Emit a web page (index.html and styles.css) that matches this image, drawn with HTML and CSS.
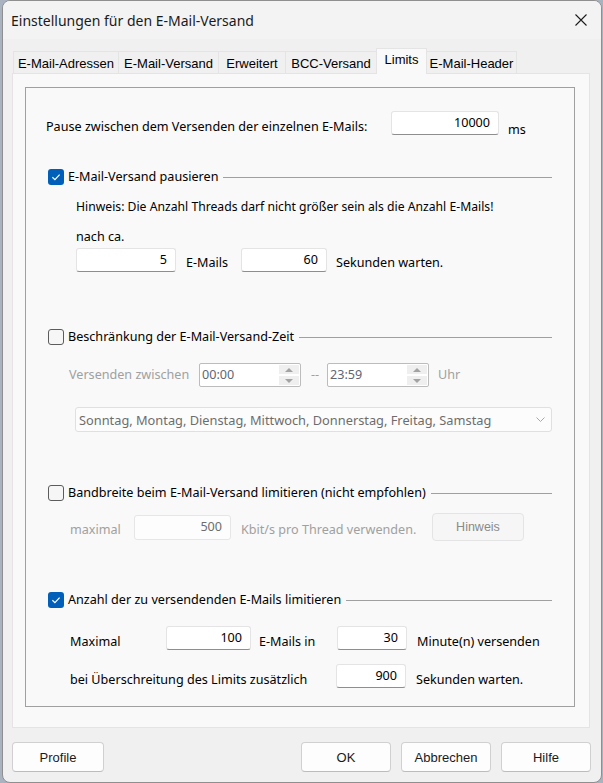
FILE: index.html
```html
<!DOCTYPE html>
<html lang="de">
<head>
<meta charset="utf-8">
<title>Einstellungen für den E-Mail-Versand</title>
<link rel="stylesheet" href="styles.css">
</head>
<body>
<div class="window">
  <div class="titlebar">
    <span class="title">Einstellungen für den E-Mail-Versand</span>
    <svg class="close" width="12" height="12" viewBox="0 0 12 12"><path d="M0.5 0.5 L11.5 11.5 M11.5 0.5 L0.5 11.5" stroke="#1c1c1c" stroke-width="1.1" fill="none"/></svg>
  </div>

  <div class="tabs">
    <div class="tab w-adr">E-Mail-Adressen</div>
    <div class="tab w-vers">E-Mail-Versand</div>
    <div class="tab w-erw">Erweitert</div>
    <div class="tab w-bcc">BCC-Versand</div>
    <div class="tab active w-lim">Limits</div>
    <div class="tab w-hdr">E-Mail-Header</div>
  </div>

  <div class="panel">
    <div class="group">
      <div class="row row-pause">
        <span class="lbl pause-lbl">Pause zwischen dem Versenden der einzelnen E-Mails:</span>
        <div class="field f-pause">10000</div>
        <span class="lbl ms-lbl">ms</span>
      </div>

      <div class="sec sec1">
        <span class="cb on"><svg width="16" height="16" viewBox="0 0 16 16"><path d="M4.4 8.3 L6.9 10.7 L11.6 5.6" stroke="#fff" stroke-width="1.2" fill="none"/></svg></span>
        <span class="sec-lbl">E-Mail-Versand pausieren</span>
        <span class="sec-line"></span>
      </div>
      <div class="note hint">Hinweis: Die Anzahl Threads darf nicht größer sein als die Anzahl E-Mails!</div>
      <div class="note">nach ca.</div>
      <div class="row row-after">
        <div class="field f-five">5</div>
        <span class="lbl low3 emails-lbl">E-Mails</span>
        <div class="field f-sixty">60</div>
        <span class="lbl low3 sek-lbl">Sekunden warten.</span>
      </div>

      <div class="sec sec2">
        <span class="cb off"></span>
        <span class="sec-lbl">Beschränkung der E-Mail-Versand-Zeit</span>
        <span class="sec-line"></span>
      </div>
      <div class="row row-time">
        <span class="lbl dis time-lbl">Versenden zwischen</span>
        <div class="time">
          <span class="time-val">00:00</span>
          <span class="spin"><span class="spin-btn"><span class="tri-up"></span></span><span class="spin-btn"><span class="tri-down"></span></span></span>
        </div>
        <span class="lbl dis dash">--</span>
        <div class="time">
          <span class="time-val">23:59</span>
          <span class="spin"><span class="spin-btn"><span class="tri-up"></span></span><span class="spin-btn"><span class="tri-down"></span></span></span>
        </div>
        <span class="lbl dis uhr">Uhr</span>
      </div>
      <div class="combo">
        <span class="combo-val">Sonntag, Montag, Dienstag, Mittwoch, Donnerstag, Freitag, Samstag</span>
        <svg class="chev" width="9" height="5" viewBox="0 0 9 5"><path d="M0.5 0.5 L4.5 4.5 L8.5 0.5" stroke="#a8a8a8" stroke-width="1" fill="none"/></svg>
      </div>

      <div class="sec sec3">
        <span class="cb off"></span>
        <span class="sec-lbl">Bandbreite beim E-Mail-Versand limitieren (nicht empfohlen)</span>
        <span class="sec-line"></span>
      </div>
      <div class="row row-band">
        <span class="lbl dis low3 max-lbl">maximal</span>
        <div class="field dis f-500">500</div>
        <span class="lbl dis low3 kbit-lbl">Kbit/s pro Thread verwenden.</span>
        <div class="btn-dis">Hinweis</div>
      </div>

      <div class="sec sec4">
        <span class="cb on"><svg width="16" height="16" viewBox="0 0 16 16"><path d="M4.4 8.3 L6.9 10.7 L11.6 5.6" stroke="#fff" stroke-width="1.2" fill="none"/></svg></span>
        <span class="sec-lbl">Anzahl der zu versendenden E-Mails limitieren</span>
        <span class="sec-line"></span>
      </div>
      <div class="row row-max">
        <span class="lbl low4 maximal-lbl">Maximal</span>
        <div class="field f-100">100</div>
        <span class="lbl low4 emailsin-lbl">E-Mails in</span>
        <div class="field f-30">30</div>
        <span class="lbl low4 min-lbl">Minute(n) versenden</span>
      </div>
      <div class="row row-over">
        <span class="lbl low4 over-lbl">bei Überschreitung des Limits zusätzlich</span>
        <div class="field f-30">900</div>
        <span class="lbl low4 min-lbl">Sekunden warten.</span>
      </div>
    </div>
  </div>

  <div class="footer">
    <div class="btn btn-profile">Profile</div>
    <div class="btn btn-ok">OK</div>
    <div class="btn">Abbrechen</div>
    <div class="btn">Hilfe</div>
  </div>
</div>
</body>
</html>
```

FILE: styles.css
```css
html, body {
  margin: 0;
  padding: 0;
}
body {
  background: #a9b2bf;
  font-family: "Noto Sans", "DejaVu Sans", sans-serif;
  font-size: 12.6px;
  color: #000;
}

.window {
  margin-left: 2px;
  width: 600px;
  height: 783px;
  box-sizing: border-box;
  border: 1px solid #8f8f8f;
  border-radius: 8px;
  background: #f0f0f0;
  overflow: hidden;
  display: flex;
  flex-direction: column;
}

/* title bar */
.titlebar {
  height: 38px;
  flex: none;
  display: flex;
  align-items: center;
  padding: 0 14px 0 8px;
  background: #f3f3f3;
  font-size: 14px;
  color: #1a1a1a;
}
.title { flex: 1; }
.close { display: block; }

/* tabs */
.tabs {
  flex: none;
  height: 25px;
  margin-top: 9px;
  padding-left: 10px;
  display: flex;
  align-items: flex-end;
}
.tab {
  height: 22px;
  box-sizing: border-box;
  border: 1px solid #e4e4e4;
  border-bottom: none;
  margin-left: -1px;
  background: #f0f0f0;
  font-family: "Liberation Sans", Arial, sans-serif;
  font-size: 13px;
  color: #000;
  display: flex;
  align-items: center;
  justify-content: center;
  padding-top: 1px;
}
.tab:first-child { margin-left: 0; }
.tab.active {
  height: 26px;
  margin-bottom: -1px;
  background: #f9f9f9;
  position: relative;
  z-index: 1;
  padding-top: 0;
  padding-bottom: 4px;
}
.w-adr { width: 106px; }
.w-vers { width: 101px; }
.w-erw { width: 68px; }
.w-bcc { width: 92px; }
.w-lim { width: 51px; }
.w-hdr { width: 91px; }

/* tab page */
.panel {
  flex: none;
  margin-left: 9px;
  width: 578px;
  height: 655px;
  box-sizing: border-box;
  border: 1px solid #e4e4e4;
  background: #f9f9f9;
  padding: 13px 0 0 12px;
}
.group {
  width: 550px;
  height: 620px;
  box-sizing: border-box;
  border: 1px solid #a0a0a0;
}

.row {
  display: flex;
  align-items: center;
  height: 24px;
}
.lbl {
  line-height: 18px;
  white-space: nowrap;
}
.low3 { padding-top: 6px; }
.low4 { padding-top: 8px; }
.dis { color: #a0a0a0; }

.field {
  height: 24px;
  box-sizing: border-box;
  background: #fff;
  border: 1px solid #e4e4e4;
  border-bottom-color: #8e8e8e;
  border-radius: 3px;
  text-align: right;
  padding-right: 8px;
  line-height: 22px;
  color: #000;
}
.field.dis {
  height: 25px;
  border-color: #e6e6e6;
  background: #fdfdfd;
  color: #6d6d6d;
}

/* row 1 */
.row-pause {
  margin-top: 23px;
  padding-left: 20px;
}
.pause-lbl { width: 345px; padding-top: 8px; }
.f-pause { width: 108px; }
.ms-lbl { margin-left: 9px; padding-top: 14px; }

/* section headers */
.sec {
  display: flex;
  align-items: center;
  height: 16px;
  padding: 0 22px;
}
.sec1 { margin-top: 34px; }
.sec2 { margin-top: 57px; }
.sec3 { margin-top: 53px; }
.sec4 { margin-top: 51px; }
.cb {
  flex: none;
  width: 16px;
  height: 16px;
  box-sizing: border-box;
  border-radius: 3px;
  display: block;
}
.cb svg { display: block; }
.cb.on { background: #005fb8; }
.cb.off {
  border: 1px solid #5c5c5c;
  background: #f6f6f6;
}
.sec-lbl {
  margin-left: 4px;
  line-height: 16px;
  white-space: nowrap;
}
.sec-line {
  flex: 1;
  height: 1px;
  background: #a0a0a0;
  margin-left: 5px;
}

/* section 1 */
.note {
  margin-top: 14px;
  padding-left: 50px;
  line-height: 16px;
}
.hint { font-size: 12.2px; }
.row-after {
  margin-top: 3px;
  padding-left: 50px;
}
.f-five { width: 100px; }
.emails-lbl { margin-left: 10px; width: 55px; }
.f-sixty { width: 86px; }
.sek-lbl { margin-left: 9px; }

/* section 2 */
.row-time {
  margin-top: 18px;
  padding-left: 43px;
}
.time-lbl { width: 130px; }
.time {
  width: 102px;
  height: 24px;
  box-sizing: border-box;
  border: 1px solid #bcbcbc;
  border-radius: 2px;
  background: #fff;
  display: flex;
  align-items: center;
  padding-left: 2px;
}
.time-val {
  flex: 1;
  color: #5d6676;
  line-height: 18px;
}
.spin {
  display: flex;
  flex-direction: column;
  gap: 2px;
  margin-right: 1px;
}
.spin-btn {
  width: 20px;
  height: 9px;
  background: #efefef;
  display: flex;
  align-items: center;
  justify-content: center;
}
.tri-up {
  width: 0;
  height: 0;
  border-left: 4px solid transparent;
  border-right: 4px solid transparent;
  border-bottom: 4px solid #a3a3a3;
}
.tri-down {
  width: 0;
  height: 0;
  border-left: 4px solid transparent;
  border-right: 4px solid transparent;
  border-top: 4px solid #a3a3a3;
}
.dash { width: 16px; margin-left: 10px; }
.uhr { margin-left: 9px; }

.combo {
  margin-top: 20px;
  margin-left: 49px;
  width: 477px;
  height: 25px;
  box-sizing: border-box;
  border: 1px solid #e0e0e0;
  border-radius: 3px;
  background: #fcfcfc;
  display: flex;
  align-items: center;
  padding: 0 6px 0 3px;
}
.combo-val {
  flex: 1;
  color: #6d6d6d;
  white-space: nowrap;
  font-size: 12.8px;
}
.chev { display: block; }

/* section 3 */
.row-band {
  margin-top: 12px;
  height: 28px;
  padding-left: 44px;
}
.max-lbl { width: 64px; }
.f-500 { width: 97px; }
.kbit-lbl { margin-left: 10px; width: 191px; }
.btn-dis {
  width: 92px;
  height: 28px;
  box-sizing: border-box;
  border: 1px solid #e4e4e4;
  border-radius: 4px;
  background: #f6f6f6;
  color: #8a8a8a;
  font-family: "Liberation Sans", Arial, sans-serif;
  font-size: 12.5px;
  display: flex;
  align-items: center;
  justify-content: center;
}

/* section 4 */
.row-max {
  margin-top: 18px;
  padding-left: 44px;
}
.row-over {
  margin-top: 14px;
  padding-left: 44px;
}
.maximal-lbl { width: 96px; }
.f-100 { width: 85px; }
.emailsin-lbl { margin-left: 8px; width: 78px; }
.f-30 { width: 70px; }
.min-lbl { margin-left: 10px; }
.over-lbl { width: 266px; }

/* footer buttons */
.footer {
  flex: none;
  display: flex;
  gap: 10px;
  margin-top: 14px;
  padding: 0 10px 0 9px;
}
.btn {
  width: 90px;
  height: 30px;
  box-sizing: border-box;
  border: 1px solid #d0d0d0;
  border-bottom-color: #bcbcbc;
  border-radius: 4px;
  background: #fdfdfd;
  font-family: "Liberation Sans", Arial, sans-serif;
  font-size: 13px;
  color: #1a1a1a;
  display: flex;
  align-items: center;
  justify-content: center;
}
.btn-profile { width: 92px; }
.btn-ok { margin-left: auto; }
```
